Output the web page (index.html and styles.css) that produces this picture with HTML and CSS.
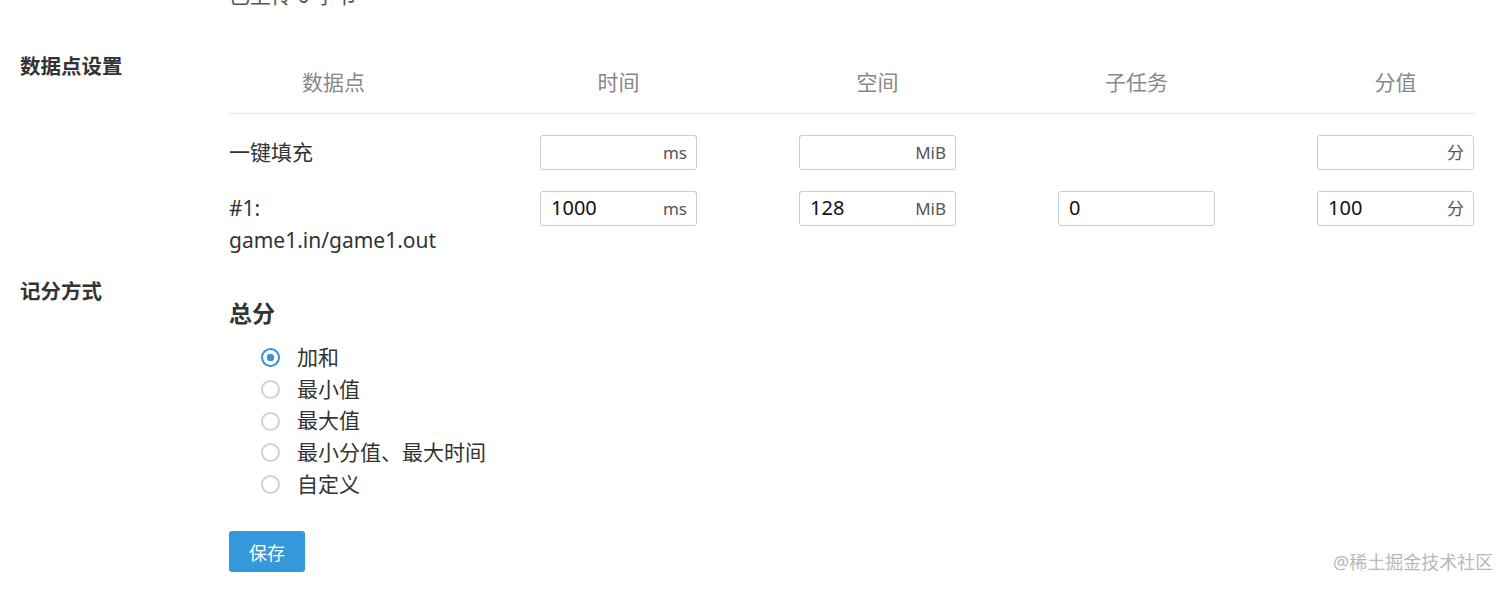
FILE: index.html
```html
<!DOCTYPE html>
<html lang="zh-CN">
<head>
  <meta charset="utf-8">
  <title>数据点设置</title>
  <link rel="stylesheet" href="styles.css">
</head>
<body>
<div class="page">
  <div class="upload-note">已上传 0 字节</div>

  <section class="form-row">
    <div class="form-label">数据点设置</div>
    <div class="form-body">
      <div class="case-grid">
        <div class="case-head">数据点</div>
        <div class="case-head">时间</div>
        <div class="case-head">空间</div>
        <div class="case-head">子任务</div>
        <div class="case-head">分值</div>

        <div class="case-name">一键填充</div>
        <div class="unit-input"><input type="text" value=""><span>ms</span></div>
        <div class="unit-input"><input type="text" value=""><span>MiB</span></div>
        <div></div>
        <div class="unit-input"><input type="text" value=""><span>分</span></div>

        <div class="case-name">#1:<br>game1.in/game1.out</div>
        <div class="unit-input"><input type="text" value="1000"><span>ms</span></div>
        <div class="unit-input"><input type="text" value="128"><span>MiB</span></div>
        <div class="unit-input"><input type="text" value="0"></div>
        <div class="unit-input"><input type="text" value="100"><span>分</span></div>
      </div>
    </div>
  </section>

  <section class="form-row">
    <div class="form-label">记分方式</div>
    <div class="form-body">
      <h3 class="score-title">总分</h3>
      <ul class="radio-list">
        <li><label><input type="radio" name="score" checked> 加和</label></li>
        <li><label><input type="radio" name="score"> 最小值</label></li>
        <li><label><input type="radio" name="score"> 最大值</label></li>
        <li><label><input type="radio" name="score"> 最小分值、最大时间</label></li>
        <li><label><input type="radio" name="score"> 自定义</label></li>
      </ul>
      <button class="btn-save">保存</button>
    </div>
  </section>
</div>
<div class="watermark">@稀土掘金技术社区</div>
</body>
</html>
```

FILE: styles.css
```css
body {
  margin: 0;
  background: #fff;
  color: #333;
  font-family: "Noto Sans", "Noto Sans CJK SC", sans-serif;
  font-size: 21px;
  line-height: 32px;
  overflow: hidden;
}
.page {
  width: 1474px;
}
.upload-note {
  margin-top: -21px;
  padding-left: 229px;
  color: #555;
  height: 32px;
  margin-bottom: 39px;
}
.form-row {
  display: grid;
  grid-template-columns: 229px 1245px;
  margin-bottom: 19px;
}
.form-label {
  padding-left: 20px;
  font-weight: bold;
  color: #333;
  font-size: 20.5px;
}
.case-grid {
  display: grid;
  grid-template-columns: 1fr repeat(4, 157px);
  column-gap: 102px;
  row-gap: 21px;
  align-items: start;
}
.case-head {
  text-align: center;
  color: #888;
  padding: 16px 0 15px;
  border-bottom: 1px solid #e6e6e6;
}
.case-grid .case-head:not(:first-child) {
  margin-left: -102px;
  padding-left: 102px;
}
.case-name {
  padding-top: 1px;
  color: #333;
}
.unit-input {
  display: flex;
  align-items: center;
  height: 33px;
  border: 1px solid #ccc;
  border-radius: 3px;
  padding: 0 9px 0 10px;
  background: #fff;
}
.unit-input input {
  flex: 1;
  min-width: 0;
  border: none;
  outline: none;
  padding: 0 0 2px;
  font-family: inherit;
  font-size: 20px;
  color: #111;
  background: transparent;
}
.unit-input span {
  font-size: 17px;
  color: #555;
}
.score-title {
  margin: 22px 0 13px;
  font-size: 23px;
  line-height: 32px;
  color: #333;
}
.radio-list {
  list-style: none;
  margin: 0 0 31px;
  padding: 0 0 0 32px;
}
.radio-list li {
  height: 31.7px;
  line-height: 31.7px;
}
.radio-list label {
  display: flex;
  align-items: center;
  gap: 17px;
  color: #333;
}
.radio-list input {
  appearance: none;
  -webkit-appearance: none;
  margin: 0;
  width: 19px;
  height: 19px;
  border: 2px solid #d2d2d2;
  border-radius: 50%;
  background: #fff;
  flex: none;
}
.radio-list input:checked {
  border-color: #3a8fd6;
  background: radial-gradient(circle, #3a8fd6 0 3.5px, #fff 4px);
}
.btn-save {
  display: block;
  width: 76px;
  height: 41px;
  border: none;
  border-radius: 3px;
  background: #3498db;
  color: #fff;
  font-family: inherit;
  font-size: 18px;
  padding: 0;
}
.watermark {
  position: absolute;
  left: 1333px;
  top: 549px;
  font-size: 18px;
  line-height: 26px;
  color: #b8b8b8;
}
```
